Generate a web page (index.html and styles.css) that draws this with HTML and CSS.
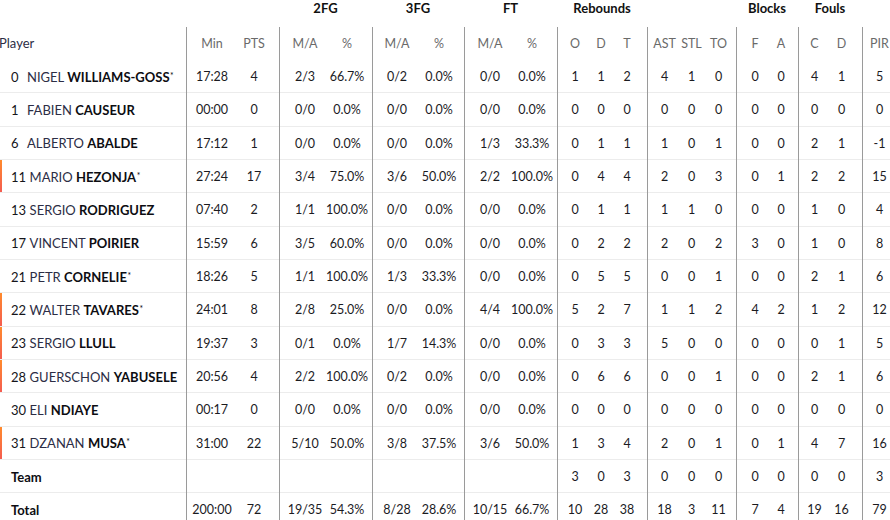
FILE: index.html
```html
<!DOCTYPE html>
<html lang="en">
<head>
<meta charset="utf-8">
<title>Box score</title>
<link rel="stylesheet" href="styles.css">
</head>
<body>
<div class="box">
  <div class="row groups">
    <span class="g g-2fg">2FG</span>
    <span class="g g-3fg">3FG</span>
    <span class="g g-ft">FT</span>
    <span class="g g-reb">Rebounds</span>
    <span class="g g-blk">Blocks</span>
    <span class="g g-fls">Fouls</span>
  </div>
  <div class="row head">
    <span class="p">Player</span><span>Min</span><span>PTS</span><span>M/A</span><span>%</span><span>M/A</span><span>%</span><span>M/A</span><span>%</span><span>O</span><span>D</span><span>T</span><span>AST</span><span>STL</span><span>TO</span><span>F</span><span>A</span><span>C</span><span>D</span><span>PIR</span>
  </div>
  <div class="row">
    <span class="p"><i class="no">0</i><span class="nm">NIGEL <b>WILLIAMS-GOSS</b><sup class="st">*</sup></span></span><span>17:28</span><span>4</span><span>2/3</span><span>66.7%</span><span>0/2</span><span>0.0%</span><span>0/0</span><span>0.0%</span><span>1</span><span>1</span><span>2</span><span>4</span><span>1</span><span>0</span><span>0</span><span>0</span><span>4</span><span>1</span><span>5</span>
  </div>
  <div class="row">
    <span class="p"><i class="no">1</i><span class="nm">FABIEN <b>CAUSEUR</b></span></span><span>00:00</span><span>0</span><span>0/0</span><span>0.0%</span><span>0/0</span><span>0.0%</span><span>0/0</span><span>0.0%</span><span>0</span><span>0</span><span>0</span><span>0</span><span>0</span><span>0</span><span>0</span><span>0</span><span>0</span><span>0</span><span>0</span>
  </div>
  <div class="row">
    <span class="p"><i class="no">6</i><span class="nm">ALBERTO <b>ABALDE</b></span></span><span>17:12</span><span>1</span><span>0/0</span><span>0.0%</span><span>0/0</span><span>0.0%</span><span>1/3</span><span>33.3%</span><span>0</span><span>1</span><span>1</span><span>1</span><span>0</span><span>1</span><span>0</span><span>0</span><span>2</span><span>1</span><span>-1</span>
  </div>
  <div class="row">
    <span class="p mark"><i class="no">11</i><span class="nm">MARIO <b>HEZONJA</b><sup class="st">*</sup></span></span><span>27:24</span><span>17</span><span>3/4</span><span>75.0%</span><span>3/6</span><span>50.0%</span><span>2/2</span><span>100.0%</span><span>0</span><span>4</span><span>4</span><span>2</span><span>0</span><span>3</span><span>0</span><span>1</span><span>2</span><span>2</span><span>15</span>
  </div>
  <div class="row">
    <span class="p"><i class="no">13</i><span class="nm">SERGIO <b>RODRIGUEZ</b></span></span><span>07:40</span><span>2</span><span>1/1</span><span>100.0%</span><span>0/0</span><span>0.0%</span><span>0/0</span><span>0.0%</span><span>0</span><span>1</span><span>1</span><span>1</span><span>1</span><span>0</span><span>0</span><span>0</span><span>1</span><span>0</span><span>4</span>
  </div>
  <div class="row">
    <span class="p"><i class="no">17</i><span class="nm">VINCENT <b>POIRIER</b></span></span><span>15:59</span><span>6</span><span>3/5</span><span>60.0%</span><span>0/0</span><span>0.0%</span><span>0/0</span><span>0.0%</span><span>0</span><span>2</span><span>2</span><span>2</span><span>0</span><span>2</span><span>3</span><span>0</span><span>1</span><span>0</span><span>8</span>
  </div>
  <div class="row">
    <span class="p"><i class="no">21</i><span class="nm">PETR <b>CORNELIE</b><sup class="st">*</sup></span></span><span>18:26</span><span>5</span><span>1/1</span><span>100.0%</span><span>1/3</span><span>33.3%</span><span>0/0</span><span>0.0%</span><span>0</span><span>5</span><span>5</span><span>0</span><span>0</span><span>1</span><span>0</span><span>0</span><span>2</span><span>1</span><span>6</span>
  </div>
  <div class="row">
    <span class="p mark"><i class="no">22</i><span class="nm">WALTER <b>TAVARES</b><sup class="st">*</sup></span></span><span>24:01</span><span>8</span><span>2/8</span><span>25.0%</span><span>0/0</span><span>0.0%</span><span>4/4</span><span>100.0%</span><span>5</span><span>2</span><span>7</span><span>1</span><span>1</span><span>2</span><span>4</span><span>2</span><span>1</span><span>2</span><span>12</span>
  </div>
  <div class="row">
    <span class="p mark"><i class="no">23</i><span class="nm">SERGIO <b>LLULL</b></span></span><span>19:37</span><span>3</span><span>0/1</span><span>0.0%</span><span>1/7</span><span>14.3%</span><span>0/0</span><span>0.0%</span><span>0</span><span>3</span><span>3</span><span>5</span><span>0</span><span>0</span><span>0</span><span>0</span><span>0</span><span>1</span><span>5</span>
  </div>
  <div class="row">
    <span class="p mark"><i class="no">28</i><span class="nm">GUERSCHON <b>YABUSELE</b></span></span><span>20:56</span><span>4</span><span>2/2</span><span>100.0%</span><span>0/2</span><span>0.0%</span><span>0/0</span><span>0.0%</span><span>0</span><span>6</span><span>6</span><span>0</span><span>0</span><span>1</span><span>0</span><span>0</span><span>2</span><span>1</span><span>6</span>
  </div>
  <div class="row">
    <span class="p"><i class="no">30</i><span class="nm">ELI <b>NDIAYE</b></span></span><span>00:17</span><span>0</span><span>0/0</span><span>0.0%</span><span>0/0</span><span>0.0%</span><span>0/0</span><span>0.0%</span><span>0</span><span>0</span><span>0</span><span>0</span><span>0</span><span>0</span><span>0</span><span>0</span><span>0</span><span>0</span><span>0</span>
  </div>
  <div class="row">
    <span class="p mark"><i class="no">31</i><span class="nm">DZANAN <b>MUSA</b><sup class="st">*</sup></span></span><span>31:00</span><span>22</span><span>5/10</span><span>50.0%</span><span>3/8</span><span>37.5%</span><span>3/6</span><span>50.0%</span><span>1</span><span>3</span><span>4</span><span>2</span><span>0</span><span>1</span><span>0</span><span>1</span><span>4</span><span>7</span><span>16</span>
  </div>
  <div class="row">
    <span class="p"><b>Team</b></span><span></span><span></span><span></span><span></span><span></span><span></span><span></span><span></span><span>3</span><span>0</span><span>3</span><span>0</span><span>0</span><span>0</span><span>0</span><span>0</span><span>0</span><span>0</span><span>3</span>
  </div>
  <div class="row">
    <span class="p"><b>Total</b></span><span>200:00</span><span>72</span><span>19/35</span><span>54.3%</span><span>8/28</span><span>28.6%</span><span>10/15</span><span>66.7%</span><span>10</span><span>28</span><span>38</span><span>18</span><span>3</span><span>11</span><span>7</span><span>4</span><span>19</span><span>16</span><span>79</span>
  </div>
</div>
</body>
</html>
```

FILE: styles.css
```css
html, body {
  margin: 0;
  padding: 0;
  overflow: hidden;
  background: #ffffff;
}

body {
  font-family: "Lato", "Liberation Sans", sans-serif;
  font-size: 12.5px;
  color: #1b1b1f;
}

.box {
  width: 899px;
  margin-left: -2px;
}

.row {
  display: grid;
  grid-template-columns:
    188px 47px 46px 47px 46px 46px 46px 47px 46px
    31px 26px 33px 31px 27px 31px 32px 30px 30px 34px 35px;
  height: 33.333px;
  box-sizing: border-box;
  background: linear-gradient(#ececec, #ececec) left bottom / 100% 1px no-repeat;
}

.row > span {
  display: flex;
  align-items: center;
  justify-content: center;
  box-sizing: border-box;
  white-space: nowrap;
  min-width: 0;
}

/* group separators */
.row > :nth-child(2),
.row > :nth-child(4),
.row > :nth-child(6),
.row > :nth-child(8),
.row > :nth-child(10),
.row > :nth-child(13),
.row > :nth-child(16),
.row > :nth-child(18),
.row > :nth-child(20) {
  border-left: 1px solid #9a9a9a;
}

.row > :nth-child(2) { padding-left: 4px; }
.row > :nth-child(3) { padding-right: 4px; }
.row > :nth-child(4) { padding-left: 4px; }
.row > :nth-child(5) { padding-right: 4px; }
.row > :nth-child(6) { padding-left: 3px; }
.row > :nth-child(7) { padding-right: 4px; }
.row > :nth-child(8) { padding-left: 4px; }
.row > :nth-child(9) { padding-right: 4px; }
.row > :nth-child(10) { padding-left: 4px; }
.row > :nth-child(12) { padding-right: 7px; }
.row > :nth-child(13) { padding-left: 3px; }
.row > :nth-child(15) { padding-right: 4px; }
.row > :nth-child(16) { padding-left: 5px; }
.row > :nth-child(17) { padding-right: 4px; }
.row > :nth-child(18) { padding-left: 2px; }
.row > :nth-child(19) { padding-right: 7px; }
.row > :nth-child(20) { padding-left: 3px; padding-right: 4px; }

/* group header row */
.row.groups {
  height: 26.667px;
  background: none;
}

.row.groups > .g {
  border: 0;
  padding: 0;
  align-items: flex-start;
  line-height: 17px;
  font-weight: 700;
  font-size: 13px;
  color: #111111;
}

.g-2fg { grid-column: 4 / span 2; }
.g-3fg { grid-column: 6 / span 2; }
.g-ft  { grid-column: 8 / span 2; }
.g-reb { grid-column: 10 / span 3; }
.g-blk { grid-column: 16 / span 2; }
.g-fls { grid-column: 18 / span 2; }

/* column header row */
.row.head {
  background: none;
  color: #6a6a6a;
}

.row.head > .p {
  padding-left: 1px;
}

/* player column */
.row > .p {
  justify-content: flex-start;
  padding-left: 13px;
  font-size: 13px;
  color: #2c2d45;
}

.p b {
  font-weight: 700;
  color: #0d0d12;
}

.no {
  font-style: normal;
  color: #15151a;
  min-width: 12.5px;
  margin-right: 3.5px;
  flex: none;
}

.nm {
  display: inline;
}

.st {
  font-size: 8.5px;
  line-height: 0;
  vertical-align: 3px;
  color: #0d0d12;
  margin-left: 0.5px;
}

.row > .mark {
  background: linear-gradient(to bottom, #ff8a2c, #f45c50) 2px top / 2px calc(100% - 1px) no-repeat;
}
```
